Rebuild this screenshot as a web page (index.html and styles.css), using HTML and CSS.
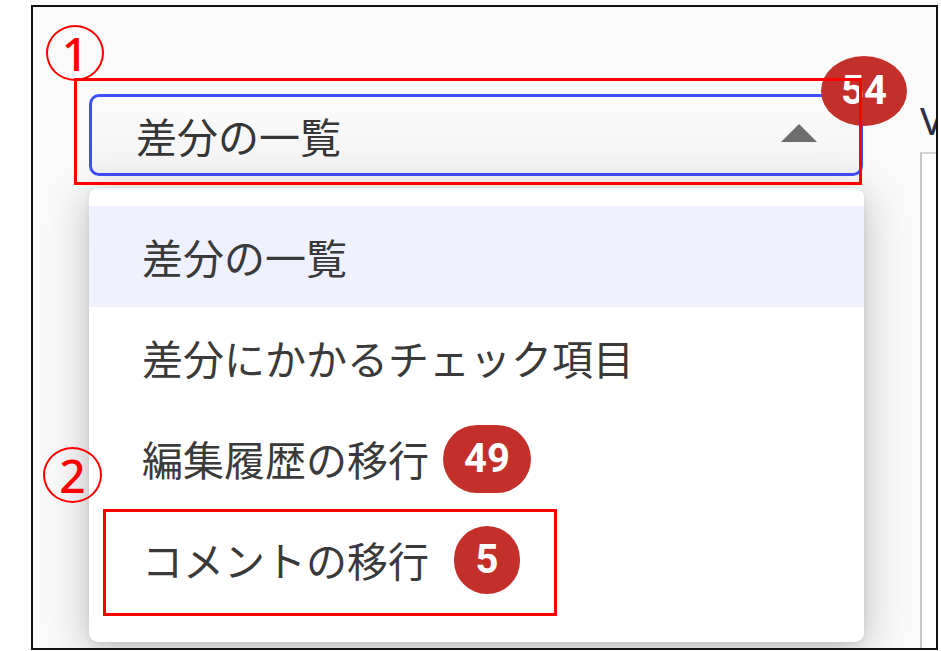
FILE: index.html
```html
<!DOCTYPE html>
<html lang="ja">
<head>
<meta charset="utf-8">
<title>差分の一覧</title>
<link rel="stylesheet" href="styles.css">
</head>
<body>
<div class="frame">
  <div class="layout">
    <div class="picker">
      <div class="select">
        <span class="select-text">差分の一覧</span>
        <span class="caret"></span>
        <span class="badge badge-top">54</span>
      </div>
      <ul class="menu">
        <li class="item active">差分の一覧</li>
        <li class="item">差分にかかるチェック項目</li>
        <li class="item">編集履歴の移行<span class="badge-slot"><span class="badge">49</span></span></li>
        <li class="item">コメントの移行<span class="badge-slot"><span class="badge">5</span></span></li>
      </ul>
    </div>
    <div class="side">
      <div class="side-label">V</div>
      <div class="side-panel"></div>
    </div>
  </div>
  <div class="mark mark1">1</div>
  <div class="mark mark2">2</div>
  <div class="callout callout1"></div>
  <div class="callout callout2"></div>
</div>
</body>
</html>
```
FILE: styles.css
```css
html, body {
  margin: 0;
  padding: 0;
  background: #ffffff;
}

body {
  font-family: "Noto Sans CJK JP", "Noto Sans", sans-serif;
  color: #3a3a3a;
}

.frame {
  position: relative;
  box-sizing: border-box;
  width: 907px;
  height: 645px;
  margin: 5px 0 0 31px;
  border: 2px solid #111;
  background: #fafafa;
  overflow: hidden;
}

.layout {
  display: flex;
  align-items: flex-start;
  padding: 87px 0 0 56px;
}

.picker {
  position: relative;
  flex: 0 0 775px;
}

.select {
  position: relative;
  box-sizing: border-box;
  display: flex;
  align-items: center;
  justify-content: space-between;
  width: 774px;
  height: 82px;
  padding: 0 43px 0 44px;
  border: 3px solid #3f4ffb;
  border-radius: 10px;
  background: linear-gradient(#fbfbfb, #f4f4f4);
}

.select-text {
  font-size: 41px;
  line-height: 1;
  color: #363636;
}

.caret {
  width: 0;
  height: 0;
  margin-top: -4px;
  border-left: 18px solid transparent;
  border-right: 18px solid transparent;
  border-bottom: 18px solid #6d6d6d;
}

.badge {
  box-sizing: border-box;
  display: inline-flex;
  align-items: center;
  justify-content: center;
  min-width: 66px;
  height: 68px;
  padding: 0 21px;
  border-radius: 34px;
  background: #c3302b;
  color: #ffffff;
  font-family: "Roboto", "Noto Sans", sans-serif;
  font-weight: 700;
  font-size: 40px;
  line-height: 1;
}

.badge-top {
  position: absolute;
  left: 729px;
  top: -41px;
  width: 86px;
  height: 70px;
  padding: 0;
  border-radius: 50%;
}

.menu {
  position: absolute;
  left: 0;
  top: 94px;
  box-sizing: border-box;
  width: 775px;
  height: 454px;
  margin: 0;
  padding: 18px 0 0;
  list-style: none;
  background: #ffffff;
  border-radius: 9px;
  box-shadow: 0 8px 44px rgba(0, 0, 0, 0.26), 0 2px 6px rgba(0, 0, 0, 0.08);
}

.item {
  display: flex;
  align-items: center;
  height: 101px;
  padding-left: 53px;
  font-size: 41px;
  line-height: 1;
  color: #3a3a3a;
}

.item.active {
  background: #eff1fe;
}

.badge-slot {
  display: inline-flex;
  justify-content: center;
  width: 88px;
  margin-left: 14px;
}

.side {
  flex: 0 0 200px;
  margin-left: 56px;
}

.side-label {
  padding-top: 6px;
  font-family: "Noto Sans", sans-serif;
  font-size: 39px;
  line-height: 40px;
  color: #2b2f4a;
}

.side-panel {
  box-sizing: border-box;
  height: 600px;
  margin-top: 12px;
  background: #ffffff;
  border-left: 2px solid #c8c8c8;
  border-top: 2px solid #d4d4d4;
}

.mark {
  position: absolute;
  box-sizing: border-box;
  display: flex;
  align-items: center;
  justify-content: center;
  width: 58px;
  height: 56px;
  border: 2px solid #ff0000;
  border-radius: 50%;
  color: #ff0000;
  font-family: "Noto Sans", sans-serif;
  font-weight: 500;
  font-size: 46px;
  line-height: 1;
}

.mark1 {
  left: 13px;
  top: 18px;
}

.mark2 {
  left: 10px;
  top: 440px;
  width: 59px;
}

.callout {
  position: absolute;
  box-sizing: border-box;
  border: 3px solid #ff0000;
}

.callout1 {
  left: 41px;
  top: 71px;
  width: 788px;
  height: 107px;
}

.callout2 {
  left: 70px;
  top: 502px;
  width: 454px;
  height: 107px;
}
```
